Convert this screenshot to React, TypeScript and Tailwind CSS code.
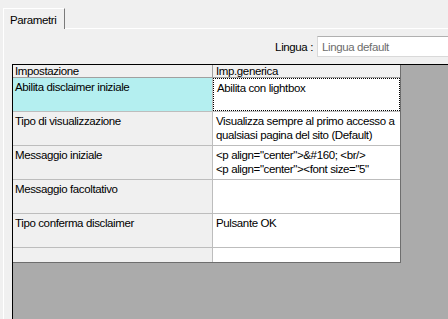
import React from 'react';

type Row = { name: string; value: string[]; selected?: boolean };

const rows: Row[] = [
  { name: 'Abilita disclaimer iniziale', value: ['Abilita con lightbox'], selected: true },
  { name: 'Tipo di visualizzazione', value: ['Visualizza sempre al primo accesso a', 'qualsiasi pagina del sito (Default)'] },
  { name: 'Messaggio iniziale', value: ['<p align="center">&#160; <br/>', '<p align="center"><font size="5"'] },
  { name: 'Messaggio facoltativo', value: [] },
  { name: 'Tipo conferma disclaimer', value: ['Pulsante OK'] },
];

const GridRow = ({ row }: { row: Row }) => (
  <div className="flex h-[34px] border-b border-[#bdbdbd]">
    <div className={`w-[200px] shrink-0 border-r border-[#bdbdbd] pl-[2px] pt-[2px] ${row.selected ? 'bg-[#b4eff0]' : 'bg-[#f0f0f0]'}`}>
      {row.name}
    </div>
    <div className={`flex-1 bg-white pl-[3px] pt-[2px] whitespace-nowrap overflow-hidden ${row.selected ? 'border border-dotted border-black pl-[2px] pt-[1px]' : ''}`}>
      {row.value.map((line, i) => (
        <div key={i}>{line}</div>
      ))}
    </div>
  </div>
);

export default function App() {
  return (
    <div className="w-[448px] h-[319px] overflow-hidden bg-[#f0f0f0] font-['Liberation_Sans',Arial,sans-serif] text-[11.5px] leading-[14px] tracking-[-0.38px] text-black flex flex-col pt-[8px] pl-[3px]">
      {/* tab strip */}
      <div className="flex h-[21px] shrink-0">
        <div className="w-[62px] border-l border-t border-white border-r border-r-[#7a7a7a] flex items-center pl-[6px] pt-[1px]">
          Parametri
        </div>
        <div className="flex-1 border-b border-white" />
      </div>

      {/* panel */}
      <div className="flex-1 border-l border-white flex flex-col min-h-0">
        <div className="flex items-center h-[21px] mt-[7px] ml-[266px] shrink-0">
          <div className="w-[43px] shrink-0 text-right whitespace-nowrap">Lingua :</div>
          <div className="ml-[4px] w-[160px] h-[21px] shrink-0 bg-white border border-[#d9d9d9] border-t-[#b0b0b0] flex items-center pl-[4px] text-[#6d6d6d] whitespace-nowrap">
            Lingua default
          </div>
        </div>

        <div className="mt-[7px] ml-[8px] flex-1 bg-[#ababab] border-l border-t border-black min-h-0">
          <div className="w-[388px] border-r border-b border-[#6e6e6e] bg-white">
            <div className="flex h-[13px] border-b border-[#a0a0a0] bg-[#f0f0f0] leading-[13px]">
              <div className="w-[200px] shrink-0 border-r border-[#a0a0a0] pl-[2px]">Impostazione</div>
              <div className="flex-1 pl-[3px]">Imp.generica</div>
            </div>
            {rows.map((r) => (
              <GridRow key={r.name} row={r} />
            ))}
            <div className="flex h-[14px]">
              <div className="w-[200px] shrink-0 border-r border-[#bdbdbd] bg-[#f0f0f0]" />
              <div className="flex-1 bg-white" />
            </div>
          </div>
        </div>
      </div>
    </div>
  );
}
